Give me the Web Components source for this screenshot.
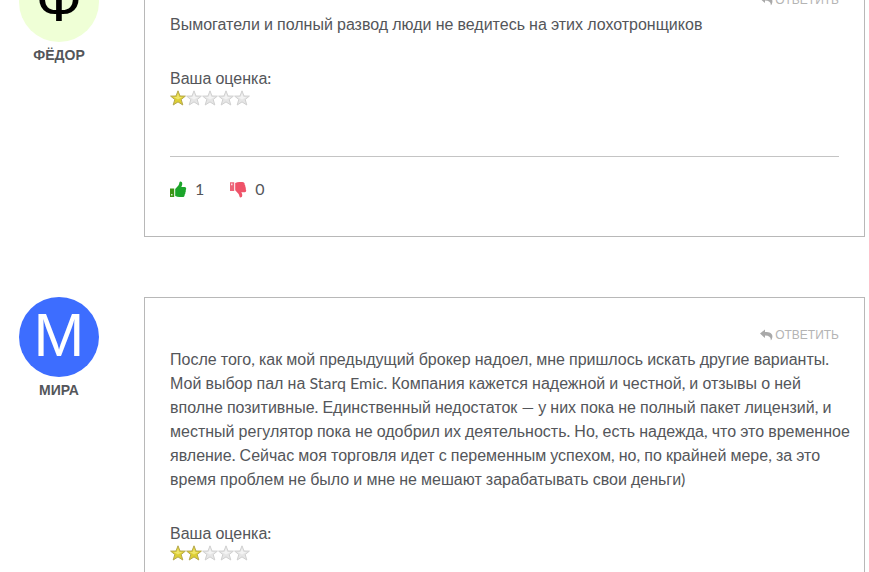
<!DOCTYPE html>
<html lang="ru">
<head>
<meta charset="utf-8">
<title>Отзывы</title>
<style>
  body {
    margin: 0;
    height: 100vh;
    overflow: hidden;
    background: #fff;
    color: #54565a;
    font: 16px/24px Lato, "Liberation Sans", sans-serif;
  }
</style>
</head>
<body>
<review-list>
  <review-item name="Фёдор" initial="Ф" disc="#efffd6" ink="#000">
    <script-text>Вымогатели и полный развод люди не ведитесь на этих лохотронщиков</script-text>
    <star-rating slot="rating" value="1"></star-rating>
    <vote-bar slot="votes" up="1" down="0"></vote-bar>
  </review-item>
  <review-item name="Мира" initial="М" disc="#3d6dff" ink="#fff">
    <script-text>После того, как мой предыдущий брокер надоел, мне пришлось искать другие варианты. Мой выбор пал на Starq Emic. Компания кажется надежной и честной, и отзывы о ней вполне позитивные. Единственный недостаток — у них пока не полный пакет лицензий, и местный регулятор пока не одобрил их деятельность. Но, есть надежда, что это временное явление. Сейчас моя торговля идет с переменным успехом, но, по крайней мере, за это время проблем не было и мне не мешают зарабатывать свои деньги)</script-text>
    <star-rating slot="rating" value="2"></star-rating>
  </review-item>
</review-list>

<script>
class ReviewList extends HTMLElement {
  constructor() {
    super();
    this.attachShadow({ mode: 'open' }).innerHTML = `
      <style>
        :host { display: flex; flex-direction: column; gap: 60px; margin: -38px 4px 0 19px; }
      </style>
      <slot></slot>`;
  }
}

// Sets Cyrillic letters in the sans face; Latin, digits and punctuation stay in Lato.
class ScriptText extends HTMLElement {
  connectedCallback() {
    if (this.shadowRoot) return;
    const root = this.attachShadow({ mode: 'open' });
    root.innerHTML = `
      <style>
        :host { display: block; }
        span { font-family: "Liberation Sans", sans-serif; line-height: 16px; }
      </style>`;
    for (const run of this.textContent.trim().split(/([\u0400-\u04FF]+)/)) {
      if (!run) continue;
      if (/[\u0400-\u04FF]/.test(run)) {
        const span = document.createElement('span');
        span.textContent = run;
        root.append(span);
      } else {
        root.append(run);
      }
    }
  }
}

class StarRating extends HTMLElement {
  connectedCallback() {
    if (this.shadowRoot) return;
    const value = Number(this.getAttribute('value'));
    const outer = 'M8 .8 L10 6 L15.4 6.1 L11.2 9.5 L12.8 15 L8 11.9 L3.2 15 L4.8 9.5 L.6 6.1 L6 6 Z';
    const stars = [1, 2, 3, 4, 5].map(n => `
      <svg class="${n <= value ? 'on' : 'off'}" viewBox="0 0 16 16" aria-hidden="true">
        <path class="edge" d="${outer}"/>
        <path class="light" d="M8 3.2 L9.2 6.9 L12.6 7 L8 9.6 L3.6 7 L6.8 6.9 Z"/>
      </svg>`).join('');
    this.attachShadow({ mode: 'open' }).innerHTML = `
      <style>
        :host { display: block; }
        .stars { display: flex; }
        svg { display: block; width: 16px; height: 16px; }
        .edge { stroke-width: 1; stroke-linejoin: round; }
        .on .edge { fill: #ddcf33; stroke: #b5a850; }
        .on .light { fill: #efe56b; }
        .off .edge { fill: #e6e6e6; stroke: #d0d0d0; }
        .off .light { fill: #f3f3f3; }
      </style>
      <script-text>Ваша оценка:</script-text>
      <div class="stars" role="img" aria-label="${value} из 5">${stars}</div>`;
  }
}

class VoteBar extends HTMLElement {
  connectedCallback() {
    if (this.shadowRoot) return;
    this.attachShadow({ mode: 'open' }).innerHTML = `
      <style>
        :host { display: flex; gap: 26px; margin-top: 50px; padding-top: 20px; border-top: 1px solid #c4c4c4; }
        button { display: flex; align-items: center; gap: 8px; margin: 0; padding: 0; border: 0; background: none; font: inherit; color: inherit; cursor: pointer; }
        svg { display: block; width: 17px; height: 17px; }
      </style>
      <button type="button" aria-label="Нравится: ${this.getAttribute('up')}">
        <svg viewBox="0 0 17 17" aria-hidden="true">
          <path fill="#3b9414" fill-rule="evenodd" d="M0 7.5h4.2v8.5H0z M1.2 12.9v1.7h1.2v-1.7z"/>
          <path fill="#1ca52b" d="M5.2 8 L8.4 4.4 Q9.3 3 9.4 1.6 Q9.6 .5 10.7 .5 Q12.5 .8 12.3 3.1 Q12.1 4.6 11.3 6 H14.7 Q16.3 6.3 16.2 7.8 Q16.1 8.7 15.7 9 Q16.2 10.3 15.4 11.3 Q15.6 12.6 14.7 13.4 Q14.8 15.9 12.3 16 H9.3 Q7.4 15.8 5.2 15 Z"/>
        </svg>
        <span>${this.getAttribute('up')}</span>
      </button>
      <button type="button" aria-label="Не нравится: ${this.getAttribute('down')}">
        <svg viewBox="0 0 17 17" aria-hidden="true">
          <path fill="#ed6478" fill-rule="evenodd" d="M0 1.3h4.2v8.6H0z M1.2 2.5v1.8h1.2v-1.8z"/>
          <path fill="#ef5369" d="M5.2 9.3 L8.4 12.7 Q9.3 14 9.4 15.2 Q9.6 16.4 10.7 16.4 Q12.5 16.1 12.3 13.9 Q12.1 12.5 11.3 11.2 H14.7 Q16.3 10.9 16.2 9.4 Q16.1 8.5 15.7 8.2 Q16.2 6.9 15.4 5.9 Q15.6 4.6 14.7 3.8 Q14.8 1.2 12.3 1.1 H9.3 Q7.4 1.3 5.2 2.1 Z"/>
        </svg>
        <span>${this.getAttribute('down')}</span>
      </button>`;
  }
}

class ReviewItem extends HTMLElement {
  connectedCallback() {
    if (this.shadowRoot) return;
    this.attachShadow({ mode: 'open' }).innerHTML = `
      <style>
        :host { display: grid; grid-template-columns: 80px minmax(0, 1fr); column-gap: 45px; }
        .author { font-family: "Liberation Sans", sans-serif; text-align: center; }
        .avatar { height: 80px; border-radius: 50%; font-size: 61px; line-height: 76px; background: ${this.getAttribute('disc')}; color: ${this.getAttribute('ink')}; }
        .name { margin-top: 1px; font-size: 14px; font-weight: 700; text-transform: uppercase; }
        .card { border: 1px solid #b8b8b8; padding: 25px 12px 35px 25px; }
        .top, .rating, .votes { margin-right: 13px; }
        .top { display: flex; justify-content: flex-end; }
        a { display: flex; align-items: center; gap: 2px; font: 12px/24px "Liberation Sans", sans-serif; text-transform: uppercase; text-decoration: none; color: #b4b4b4; }
        svg { display: block; width: 13px; height: 12px; }
        .rating { margin-top: 30px; }
      </style>
      <div class="author">
        <div class="avatar" aria-hidden="true">${this.getAttribute('initial')}</div>
        <div class="name">${this.getAttribute('name')}</div>
      </div>
      <article class="card">
        <div class="top">
          <a href="#reply">
            <svg viewBox="0 0 13 12" aria-hidden="true"><path fill="#a9a9a9" d="M0 4.6 L5 .4 V2.9 C10.3 2.9 13 4.7 12.3 8.4 Q12 10.2 10.8 11.6 Q11.3 6.8 5 6.6 V9.1 Z"/></svg>
            <span>Ответить</span>
          </a>
        </div>
        <slot></slot>
        <div class="rating"><slot name="rating"></slot></div>
        <div class="votes"><slot name="votes"></slot></div>
      </article>`;
  }
}

customElements.define('script-text', ScriptText);
customElements.define('star-rating', StarRating);
customElements.define('vote-bar', VoteBar);
customElements.define('review-item', ReviewItem);
customElements.define('review-list', ReviewList);
</script>
</body>
</html>
